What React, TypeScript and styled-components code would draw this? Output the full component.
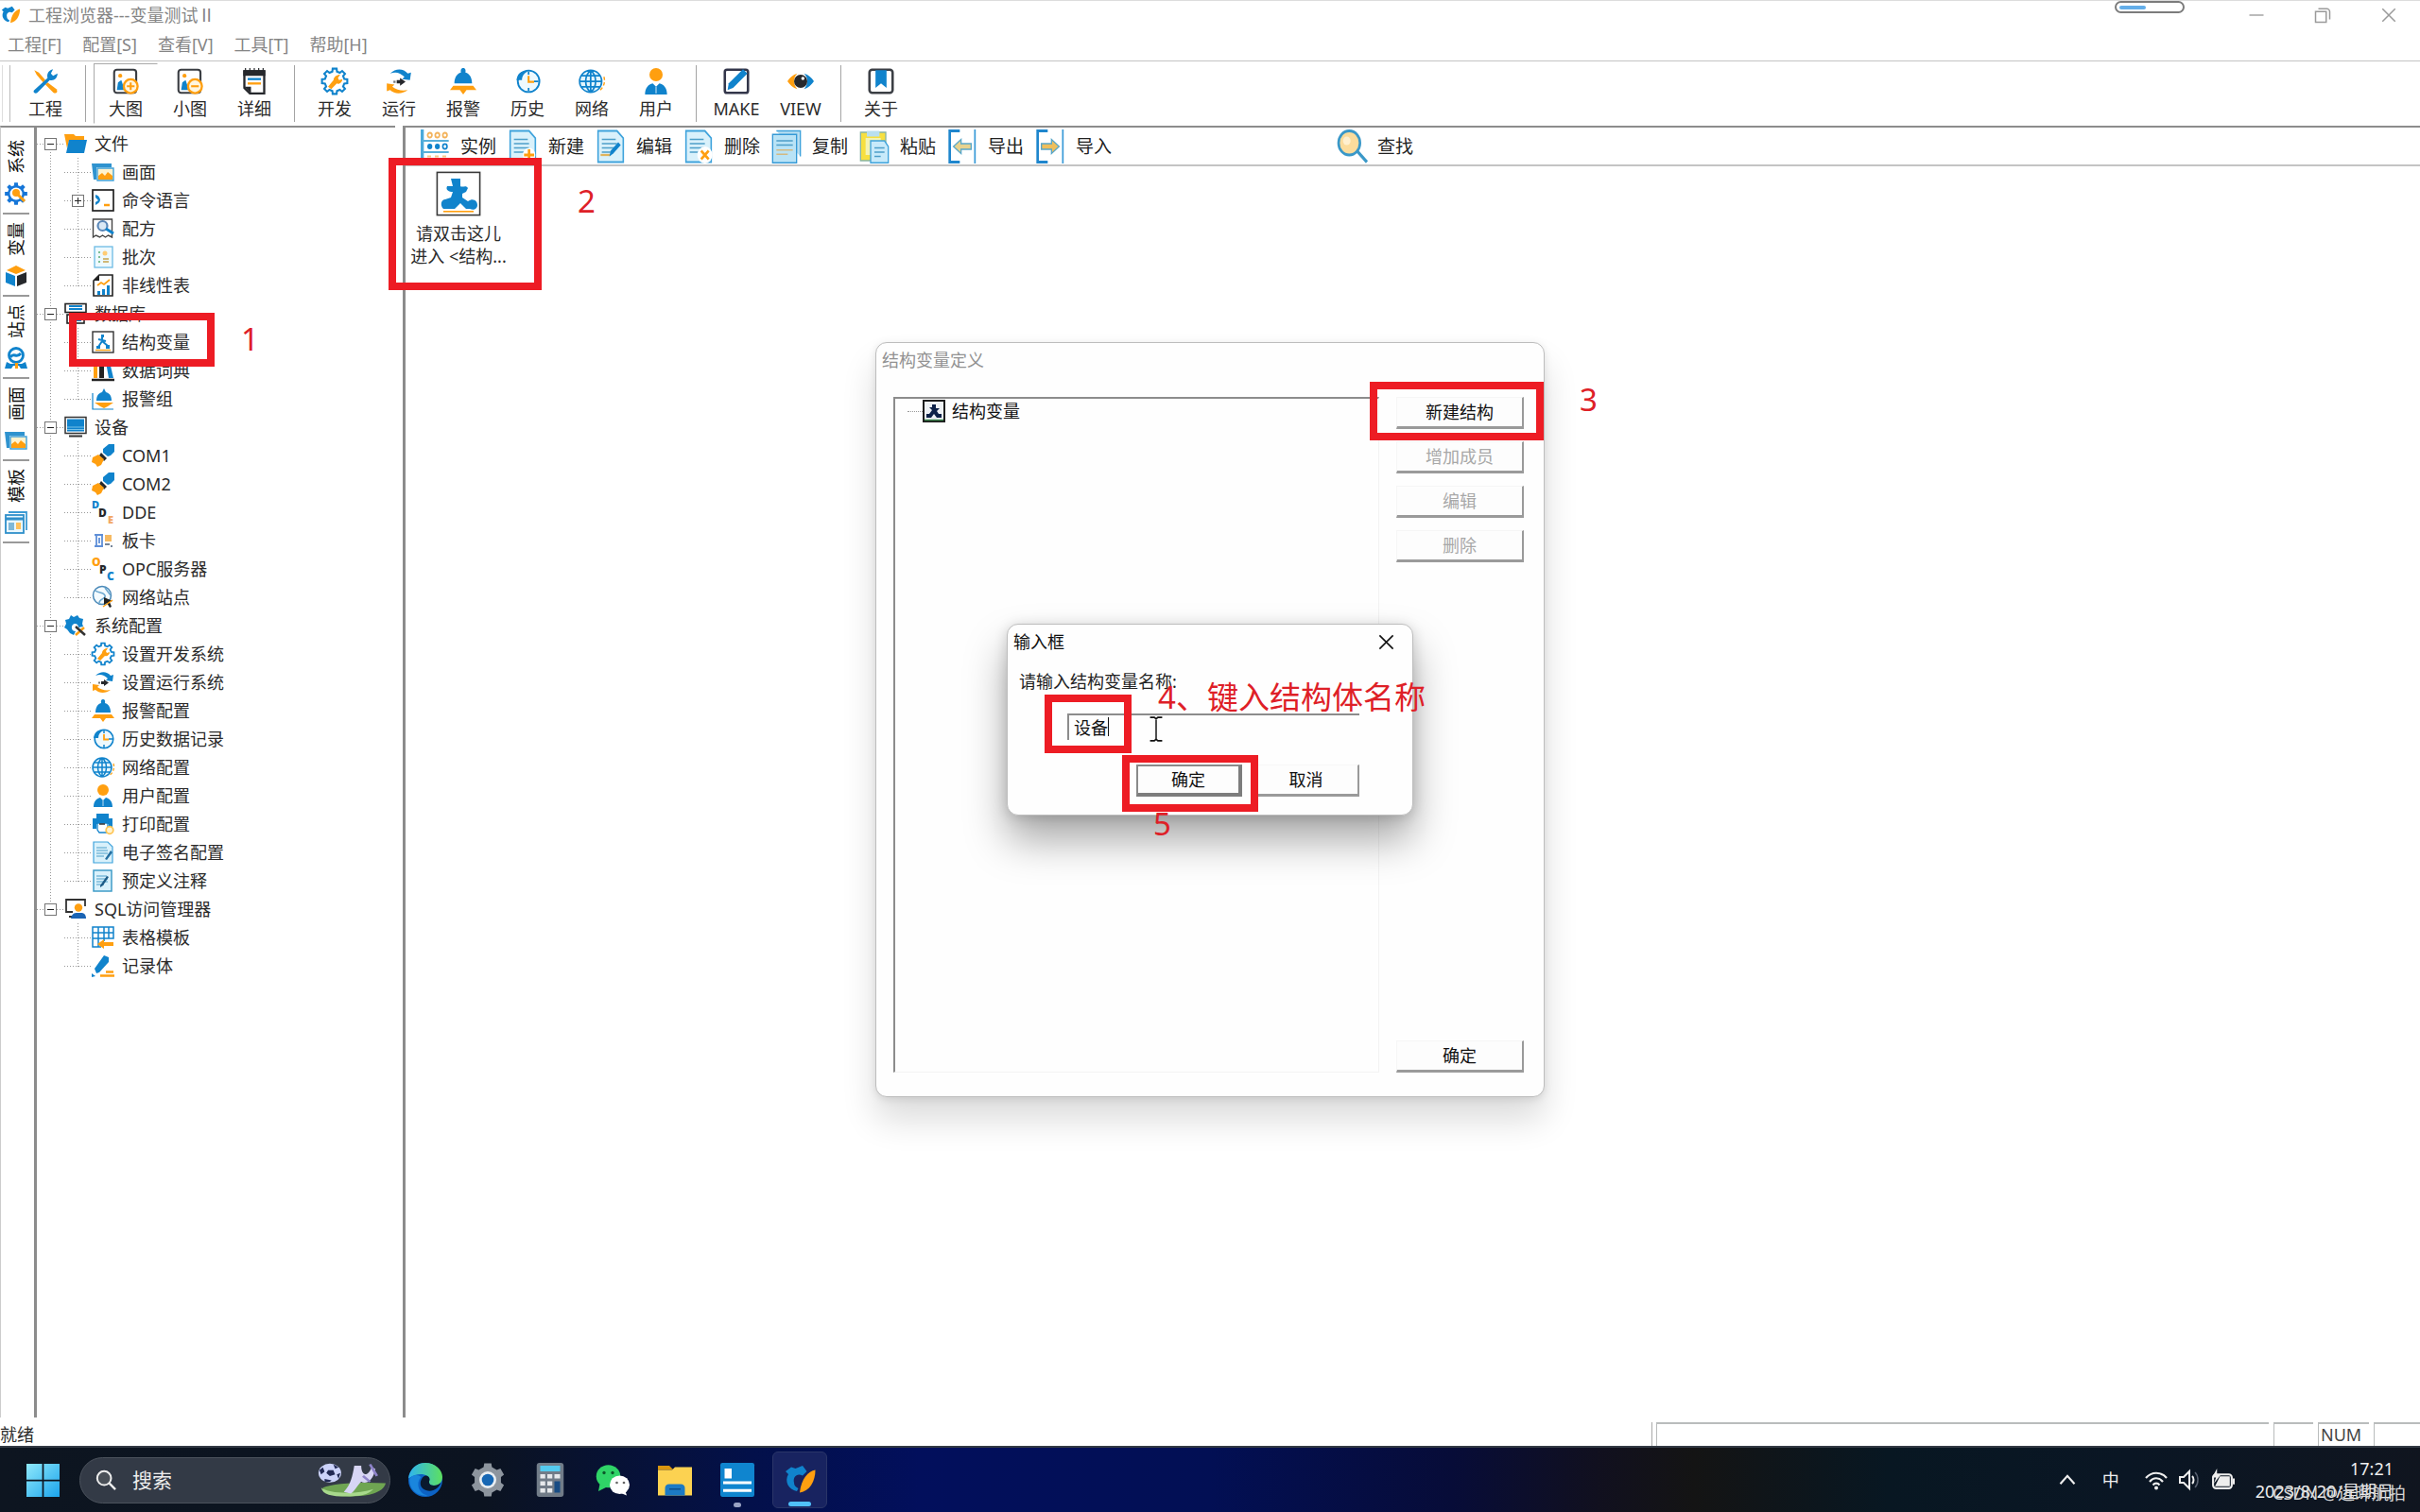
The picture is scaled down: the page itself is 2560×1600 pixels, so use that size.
import React from "react";
import styled, { createGlobalStyle, css } from "styled-components";

const BLUE = "#1083cc";
const ORANGE = "#ff9f10";
const INK = "#26282c";
const SKY = "#d9f1fb";
const EDGE = "#8c8c8c";
const RED = "#ed1c24";

const Global = createGlobalStyle`
  *, *::before, *::after { box-sizing: border-box; }
  body { margin: 0; background: #fff; color: #2b2b2b;
    font: 18px/24px "Noto Sans", "Noto Sans CJK SC", sans-serif; }
  button, input { font: inherit; color: inherit; margin: 0; padding: 0; border: 0; background: none; border-radius: 0; }
  ul { list-style: none; margin: 0; padding: 0; }
  svg { display: block; flex: none; overflow: visible; }
`;

/* ---------- drawings ---------- */

const gearPath = (teeth: number, outer: number, inner: number) => {
  const pts: string[] = [];
  const step = (Math.PI * 2) / teeth;
  for (let i = 0; i < teeth; i++) {
    const a = i * step - Math.PI / 2;
    [[-0.3, inner], [-0.2, outer], [0.2, outer], [0.3, inner]].forEach(([k, r]) => {
      pts.push(`${(12 + Math.cos(a + k * step) * r).toFixed(2)} ${(12 + Math.sin(a + k * step) * r).toFixed(2)}`);
    });
  }
  return `M${pts.join("L")}Z`;
};

const page = <path d="M2 1h15l5 5v17H2z" fill={SKY} stroke="#3fa3dc" strokeWidth="1.2" />;
const pageLines = <path d="M5 7h11M5 10h12M5 13h12M5 16h8" stroke="#4d9fc9" strokeWidth="1" fill="none" />;
const photo = (
  <>
    <rect x="1.5" y="1.5" width="20" height="21" rx="2.5" fill="#fff" stroke="#3a3d42" strokeWidth="1.8" />
    <circle cx="7" cy="7" r="1.8" fill={ORANGE} />
    <path d="M4 20l1-7 3-2 3 9z" fill={BLUE} />
    <circle cx="16.5" cy="16.5" r="6.3" fill="#fff6df" stroke={ORANGE} strokeWidth="2" />
  </>
);

const art: Record<string, React.ReactNode> = {
  logo: (
    <>
      <path d="M10 20C4 19 1 13 4 8l-2-2 4-3 3 1 5-2 3 4-3 3c-4-2-7 1-6 5 0 2 1 3 3 4z" fill={BLUE} />
      <path d="M23 5c-5 1-10 6-11 16 7-1 11-8 11-16z" fill={ORANGE} />
    </>
  ),
  tools: (
    <>
      <path d="M2 2l4 2 6 7-2 2-6-7z" fill={ORANGE} />
      <path d="M14 13l8 6c2 3-1 5-3 3l-7-7z" fill={ORANGE} />
      <path d="M2 20L14 9c-1-4 1-7 5-8l-2 4 2 2 4-2c0 4-3 7-7 6L5 22c-2 2-5 0-3-2z" fill={BLUE} />
    </>
  ),
  zoomIn: <>{photo}<path d="M13 16.500h7M16.500 13v7" stroke={ORANGE} strokeWidth="1.800" /></>,
  zoomOut: <>{photo}<path d="M13 16.500h7" stroke={ORANGE} strokeWidth="1.800" /></>,
  detail: (
    <>
      <path d="M3 3h18v20H8l-5-5z" fill="#fff" stroke={INK} strokeWidth="2" />
      <path d="M2 2h20v5H2zM3 17l6 6v-6z" fill={INK} />
      <path d="M4 0v3M8 0v3M12 0v3M16 0v3M20 0v3" stroke={INK} />
      <path d="M6 10h12" stroke={BLUE} strokeWidth="2" /><path d="M6 14h12" stroke={ORANGE} strokeWidth="2" />
    </>
  ),
  dev: (
    <>
      <path d={gearPath(8, 11.6, 9)} fill="none" stroke={BLUE} strokeWidth="1.8" />
      <path d="M6 17l5-6c0-3 3-5 6-5l-2 3 1 2 3-1c0 3-3 5-5 4l-5 5z" fill={ORANGE} />
    </>
  ),
  run: (
    <>
      <path d="M4 5c5-5 12-5 16 0l3-1-1 7-7-1 2-2C13 4 9 3 4 5z" fill={BLUE} />
      <path d="M20 20c-5 4-12 4-16 0l-3 1V14l7 1-2 2c4 3 9 4 14 3z" fill={ORANGE} />
      <path d="M10 11h3V9l5 3.500-5 3.500v-2h-3z" fill={INK} /><path d="M7 12.500h2" stroke="#777" strokeWidth="2" />
    </>
  ),
  bell: (
    <>
      <path d="M12 0c2 0 2.500 2 2 4 4 1 6 5 6 10H4C4 9 6 5 10 4c-.5-2 0-4 2-4z" fill={BLUE} />
      <path d="M3 16h18l3 4H15l-3 4-3-4H0z" fill={ORANGE} />
    </>
  ),
  bellGroup: (
    <>
      <path d="M1 6v17h22" fill="none" stroke={BLUE} strokeWidth="1.2" />
      <path d="M13 1l2 4c4 1 6 4 6 9H5c0-5 2-8 6-9z" fill={BLUE} />
      <path d="M3 16h20l-6 4-4 2-4-2z" fill={ORANGE} />
    </>
  ),
  history: (
    <>
      <circle cx="13" cy="12" r="9.800" fill="#eef9fe" stroke={BLUE} strokeWidth="1.600" />
      <path d="M13 3v3M13 18v3M18 12h4" stroke={BLUE} strokeWidth="1.500" />
      <path d="M0 11h7c0-4 2-6 5-8C6 2 3 5 2 11z" fill={BLUE} />
      <path d="M13 7v5.500h5" fill="none" stroke={ORANGE} strokeWidth="1.800" />
    </>
  ),
  globe: (
    <>
      <circle cx="11" cy="12" r="10" fill="#e3f5fc" />
      <path d="M11 2a10 10 0 100 20 10 10 0 000-20zM11 2v20M1 12h20M3 7h16M3 17h16M11 2c-6 5-6 15 0 20M11 2c6 5 6 15 0 20" fill="none" stroke={BLUE} strokeWidth="1.500" />
      <path d="M23 8a11 11 0 01-5 13" fill="none" stroke={ORANGE} strokeWidth="1.200" strokeDasharray="3 2" />
    </>
  ),
  user: (
    <>
      <circle cx="12" cy="6" r="6" fill={ORANGE} />
      <path d="M2 24c0-6 3-9 7-10l3 3 3-3c4 1 7 4 7 10z" fill={BLUE} /><path d="M12 17v6" stroke="#fff" strokeWidth=".7" />
    </>
  ),
  make: (
    <>
      <rect x="1.500" y="1.500" width="21" height="21" rx="2" fill="#fff" stroke="#33364a" strokeWidth="2.200" />
      <path d="M4 20l1-6L18 1l4 4L9 18z" fill={BLUE} />
    </>
  ),
  view: (
    <>
      <path d="M9 5C5 6 2 9 0 12c2 3 5 6 9 7-4-4-4-10 0-14z" fill={ORANGE} />
      <path d="M15 5c4 1 7 4 9 7-2 3-5 6-9 7 4-4 4-10 0-14z" fill={BLUE} />
      <circle cx="12" cy="12" r="6" fill={INK} /><circle cx="14" cy="9.500" r="1.500" fill="#fff" />
    </>
  ),
  about: (
    <>
      <rect x="1.500" y="1.500" width="21" height="21" rx="2.500" fill="#fff" stroke="#3c3f45" strokeWidth="2.200" />
      <path d="M7 2h10v16l-5-4-5 4z" fill={BLUE} />
    </>
  ),
  folder: (
    <>
      <path d="M0 2h10l2 2h9v5H5L3 17z" fill={ORANGE} /><path d="M5 8h19l-3 14H2z" fill={BLUE} />
    </>
  ),
  pictures: (
    <>
      <path d="M0 3h21v4H5v13H2z" fill="#2f93cf" /><path d="M6 8h17v13H6z" fill="#fff3cf" stroke="#3fa0d8" strokeWidth="1.400" />
      <path d="M7 20v-4l4-3 3 3 3-4 5 4v4z" fill={ORANGE} />
    </>
  ),
  cmd: (
    <>
      <rect x="1" y="1" width="22" height="22" fill="#fff" stroke="#222" strokeWidth="1.700" />
      <path d="M4 6c4 1 4 3 5 5 0 3-2 4-5 6v-3l3-2-3-3z" fill={BLUE} /><path d="M13 17h6" stroke={ORANGE} strokeWidth="2.500" />
    </>
  ),
  recipe: (
    <>
      <path d="M1.500 2h20v19l-4-2-3 2-3-2-3 2-4-2-3 2z" fill="#fff" stroke="#444" strokeWidth="1.400" />
      <circle cx="11.500" cy="9" r="5" fill="#dbe9f5" stroke="#5a87b8" strokeWidth="2.200" /><path d="M15 12l8 5" stroke={BLUE} strokeWidth="3" />
    </>
  ),
  batch: (
    <>
      <rect x="3" y="1" width="19" height="22" fill="#edf9ff" stroke="#6cbbe4" strokeWidth="1.300" />
      <path d="M8 6v13" stroke="#58ac73" strokeWidth="1.500" strokeDasharray="2 3" /><circle cx="14" cy="8" r="2.500" fill="#ffcc74" />
      <path d="M12 14h6M12 17h6" stroke="#d0b878" strokeWidth="2" />
    </>
  ),
  chart: (
    <>
      <path d="M8 1h14v22H2V7z" fill="#fff" stroke="#222" strokeWidth="1.600" /><path d="M8 1v6H2z" fill="#222" />
      <path d="M6 12l4-3 3 2 6-5" fill="none" stroke={ORANGE} strokeWidth="1.800" /><path d="M6 22v-4h3v4zM11 22v-6h3v6zM16 22V12h3v10z" fill={BLUE} />
    </>
  ),
  db: (
    <>
      <rect x="1" y="1.500" width="22" height="9" fill="#fff" stroke="#222" strokeWidth="1.600" />
      <path d="M5 4h14M5 7h14" stroke={BLUE} strokeWidth="2" />
      <rect x="3" y="13" width="18" height="9" fill="#fff" stroke="#222" strokeWidth="1.600" /><path d="M12 16h6v4h-6z" fill={BLUE} />
    </>
  ),
  struct: (
    <>
      <rect x="1" y="1" width="22" height="22" fill="#fff" stroke="#333" strokeWidth="1.400" />
      <path d="M11 5v7M7 9l8 2M11 11l-4 6M11 11l6 5" stroke={BLUE} strokeWidth="2" />
      <path d="M10 4h3v3h-3zM5 16h4v3H5zM15 15h4v4h-4z" fill={BLUE} />
      <path d="M4 20.500h16" stroke={ORANGE} strokeWidth="1.400" />
    </>
  ),
  structBig: (
    <>
      <rect x=".7" y=".7" width="22.600" height="22.600" fill="#fff" stroke="#3a3a3a" strokeWidth=".8" />
      <path d="M8 4h5v4c1 1 3-1 4 1l-1 2-2 1v2l3 2c3-2 5 0 5 2s-2 3-4 2h-2l-3-3-3 3H4c-2-2-1-5 1-5l3-1 1-3c-2 0-4-1-3-3h3z" fill={BLUE} />
      <path d="M4 21.400h16" stroke={ORANGE} strokeWidth=".8" />
    </>
  ),
  structDark: (
    <>
      <rect x="1" y="1" width="22" height="22" fill="#eef1f4" stroke="#1c1c1c" strokeWidth="2" />
      <path d="M10 5h4v4h4l-3 3 2 3h3v4h-5l-3-4-3 4H4v-4h3l3-4-3-3h3z" fill="#0d2148" />
      <path d="M2 21.500h20" stroke="#3f8a50" strokeWidth="1.500" />
    </>
  ),
  books: (
    <>
      <path d="M2 3h4v17H2z" fill={ORANGE} /><path d="M8 1h5v19H8z" fill="#222" /><path d="M15 3h4l4 17h-5z" fill={BLUE} />
      <path d="M0 22h24" stroke="#222" strokeWidth="2.500" />
    </>
  ),
  monitor: (
    <>
      <rect x="1" y="1.500" width="22" height="17" fill="#fff" stroke="#333" strokeWidth="1.500" /><path d="M3 3.500h18v13H3z" fill={BLUE} />
      <path d="M3 12h18M3 14.500h18" stroke="#8fd0ef" strokeWidth=".8" /><path d="M5 21.500h14" stroke="#333" strokeWidth="2" />
    </>
  ),
  plug: (
    <>
      <path d="M12 5l6-5h6v8l-4 4-3 1-5-4z" fill={BLUE} /><path d="M10 9l6 6-3 3-5-6z" fill={INK} />
      <path d="M1 14l6-3 6 5-3 6-4 2-2-3-4-2z" fill={ORANGE} />
    </>
  ),
  dde: (
    <g fontFamily="Open Sans" fontWeight="800" fontSize="11">
      <text x="0" y="8" fill={BLUE}>D</text><text x="7" y="17" fill={INK} fontSize="12">D</text><text x="17" y="24" fill="#f2a765">E</text>
    </g>
  ),
  opc: (
    <g fontFamily="Open Sans" fontWeight="800" fontSize="12">
      <text x="0" y="9" fill={ORANGE}>O</text><text x="8" y="17" fill={INK}>P</text><text x="16" y="24" fill={BLUE}>C</text>
    </g>
  ),
  board: (
    <>
      <path d="M3 6h9M5 6v12M3 18h9M8 9v6M11 6v12" stroke="#5f8fd8" strokeWidth="1.800" />
      <path d="M14 6h7v7h-7z" fill="#f6ba62" /><path d="M14 16h5M20 18h2" stroke="#77879a" strokeWidth="2" />
    </>
  ),
  netSite: (
    <>
      <circle cx="11" cy="10" r="9.500" fill="#f4fbff" stroke="#4a89b8" strokeWidth="1.500" />
      <path d="M4 5c3 3 8 1 10 5s-6 3-6 8M14 2l6 8" fill="none" stroke="#6ba7cf" strokeWidth="1.500" />
      <path d="M13 12l9 4-3 1 2 5-2 1-3-5-3 2z" fill="#222" /><path d="M12 22l10-7" stroke={ORANGE} strokeWidth="1.500" />
    </>
  ),
  sysGear: (
    <>
      <path d="M7 1l3 2 4-2 2 3 4 1-1 5 1 3-5 1c0-6-8-5-7 1 0 2 2 3 4 3l-2 4-4-2-3-4-3-2 2-4-1-4 4-1z" fill={BLUE} />
      <path d="M12 22l9-8" stroke={ORANGE} strokeWidth="2.500" /><path d="M12 13l10 9" stroke="#333" strokeWidth="2.500" />
    </>
  ),
  printer: (
    <>
      <path d="M5 1h13v5H5zM1 6h21v11h-4v-5H5v5H1z" fill={BLUE} /><path d="M6 11h11v10H8l-2-3z" fill="#fff" stroke={BLUE} strokeWidth="1.300" />
      <path d="M8 12h6" stroke="#333" strokeWidth="1.500" /><circle cx="19" cy="18.500" r="3.800" fill="#fff3cf" stroke="#ffc452" strokeWidth="1.800" />
    </>
  ),
  sign: <>{page}{pageLines}<path d="M14 19l6-9 2 2-6 8z" fill="#246fa0" /></>,
  note: (
    <>
      <rect x="2" y="1" width="19" height="22" fill={SKY} stroke="#3f9cc8" strokeWidth="1.500" />
      {pageLines}<path d="M9 17l7-10 2 1-6 9-3 2z" fill="#1d5b86" />
    </>
  ),
  sql: (
    <>
      <path d="M9 15H2V2h20v7M5 20h6" fill="none" stroke="#333" strokeWidth="1.800" />
      <circle cx="15" cy="10.500" r="4.200" fill={ORANGE} /><path d="M7 22c1-5 3-6 7-6h4c3 0 5 2 5 6z" fill="#1b64b4" />
    </>
  ),
  table: (
    <>
      <path d="M1 1h22v12H1zM1 7h22M1 13v9h9M7 1v21M13 1v15M18 1v12" fill="none" stroke={BLUE} strokeWidth="1.500" />
      <path d="M6 19l7-5v3h10v4H13v3z" fill={ORANGE} />
    </>
  ),
  pen: (
    <>
      <path d="M3 15L13 1l5 2v5L8 19l-3 1z" fill={BLUE} /><path d="M0 20l4 3-4 1z" fill={BLUE} />
      <path d="M9 22.500h15M15 18.500h8" stroke={ORANGE} strokeWidth="2.500" />
    </>
  ),
  gearSearch: (
    <>
      <path d={gearPath(8, 12, 9)} fill="#1676d8" /><circle cx="12" cy="12" r="6.500" fill="#fff" />
      <circle cx="12" cy="11" r="4" fill={ORANGE} /><path d="M14 13l7 7" stroke={ORANGE} strokeWidth="3" />
    </>
  ),
  cube: (
    <>
      <path d="M2 6l10-5 10 5-10 4z" fill={ORANGE} /><path d="M1 8l10 4v11L1 19z" fill={BLUE} /><path d="M23 8l-10 4v11l10-4z" fill={INK} />
    </>
  ),
  site: (
    <>
      <circle cx="12" cy="9" r="7.500" fill="#fff" stroke={BLUE} strokeWidth="2.800" /><path d="M6 11c4-6 6 2 11-4" fill="none" stroke={BLUE} strokeWidth="3" />
      <path d="M2 16l4 2h12l4-2 2 7h-7l-2-3H9l-2 3H0z" fill={BLUE} /><path d="M11 17h3v6h-3z" fill={ORANGE} />
    </>
  ),
  template: (
    <>
      <path d="M4 1h19v19" fill="none" stroke="#3c9bd4" strokeWidth="1.800" /><rect x="1" y="4" width="19" height="19" fill="#eaf7fd" stroke="#2f8fca" strokeWidth="1.800" />
      <path d="M1 8h19" stroke="#2f8fca" strokeWidth="3" /><path d="M4 12h6v8H4z" fill="#7fb8d8" /><path d="M12 12h5v7h-5z" fill="#ffc15d" />
    </>
  ),
  instance: (
    <>
      <path d="M2 0v24" stroke="#4ba9db" strokeWidth="2.500" /><path d="M2 8h21M2 16h21M2 22h21" stroke="#58afd9" strokeWidth="1.300" />
      <g fill="none" stroke="#f3b35c" strokeWidth="1.300"><circle cx="8" cy="4" r="1.700" /><circle cx="14" cy="4" r="1.700" /><circle cx="20" cy="4" r="1.700" /></g>
      <circle cx="8" cy="12" r="2" fill={BLUE} /><circle cx="14" cy="12" r="2" fill={BLUE} /><circle cx="20" cy="12" r="1.700" fill="none" stroke={BLUE} strokeWidth="1.200" />
      <path d="M6 19h16" stroke="#f3c98c" strokeWidth="1.200" strokeDasharray="3 3" />
    </>
  ),
  docNew: <>{page}{pageLines}<circle cx="17" cy="18" r="5" fill="#fff" /><path d="M13 18h8M17 14v8" stroke={ORANGE} strokeWidth="2" /></>,
  docEdit: <>{page}{pageLines}<path d="M4 18h8" stroke="#e0b45c" strokeWidth="1.500" /><path d="M11 19l1-4 6-6 2 2-6 6z" fill={BLUE} /></>,
  docDelete: <>{page}{pageLines}<circle cx="17" cy="18" r="6" fill="#fff" /><path d="M14 15l6 6M20 15l-6 6" stroke={ORANGE} strokeWidth="2" /></>,
  docCopy: (
    <>
      <path d="M4 1h19v18" fill="#b7def1" stroke="#3fa3dc" /><rect x="1" y="3.500" width="19" height="20" fill="#b9e3f6" stroke="#3599d6" />
      <path d="M4 8h13M4 11h13" stroke="#4d9fc9" /><path d="M4 14.500h13M4 17.500h9" stroke="#d4b981" />
    </>
  ),
  paste: (
    <>
      <path d="M1 2h20v20H1z" fill="#f7e040" stroke="#88b4a4" /><path d="M5 6h12v12H5z" fill="#f4f3b4" /><path d="M6 1h10v4H6z" fill="#b9dff0" />
      <path d="M9 8h11l3 4v11.500H9z" fill="#c8eafa" stroke="#3fa3dc" /><path d="M12 13h8M12 16h8M12 19h5" stroke="#4d9fc9" />
    </>
  ),
  exportDoc: (
    <>
      <path d="M10 1H2v22h8" fill="none" stroke="#1f86cd" strokeWidth="2" /><path d="M22 0v24" stroke="#3a9bd8" strokeWidth="1.300" />
      <path d="M5 12l6-5v3h8v4h-8v3z" fill="#e7d38f" stroke="#5aa7c8" />
    </>
  ),
  importDoc: (
    <>
      <path d="M10 1H2v22h8" fill="none" stroke="#1f86cd" strokeWidth="2" /><path d="M22 0v24" stroke="#3a9bd8" strokeWidth="1.300" />
      <path d="M19 12l-6-5v3H5v4h8v3z" fill="#efbf5c" stroke="#5aa7c8" />
    </>
  ),
  find: (
    <>
      <circle cx="10" cy="9.500" r="8.500" fill="#fbdc9c" stroke="#3a98c8" strokeWidth="2" /><circle cx="8" cy="8" r="3" fill="#fff0cf" />
      <path d="M16 15l8 8" stroke="#3a98c8" strokeWidth="2.200" />
    </>
  ),
  close: <path d="M3 3l18 18M21 3L3 21" stroke="currentColor" strokeWidth="2" />,
  minimise: <path d="M2 12h20" stroke="currentColor" strokeWidth="1.800" />,
  restore: <path d="M2 7h15v15H2zM6 3h12c2 0 4 2 4 4v11" fill="none" stroke="currentColor" strokeWidth="2" />,
  caretUp: <path d="M3 17l9-10 9 10" fill="none" stroke="currentColor" strokeWidth="2.600" />,
  wifi: (
    <>
      <path d="M1 10c6-7 16-7 22 0M5 14c4-5 10-5 14 0M8.500 17.500c2-2.500 5-2.500 7 0" fill="none" stroke="currentColor" strokeWidth="2.200" />
      <circle cx="12" cy="20.500" r="2" fill="currentColor" />
    </>
  ),
  speaker: (
    <>
      <path d="M2 9h4l6-6v18l-6-6H2z" fill="none" stroke="currentColor" strokeWidth="2" />
      <path d="M15 8c2 2 2 6 0 8" fill="none" stroke="currentColor" strokeWidth="2" /><path d="M18 4c4 4 4 12 0 16" fill="none" stroke="#596170" strokeWidth="1.500" />
    </>
  ),
  battery: (
    <>
      <rect x="2" y="6" width="19" height="14" rx="3" fill="none" stroke="currentColor" strokeWidth="2" /><path d="M22 10h2v6h-2zM9 8h10v10H4z" fill="currentColor" />
      <path d="M6 0L1 9h4l-2 6 7-9H6z" fill="currentColor" />
    </>
  ),
  windows: <path d="M0 0h11.400v11.400H0zM12.600 0H24v11.400H12.600zM0 12.600h11.400V24H0zM12.600 12.600H24V24H12.600z" fill="url(#winFill)" />,
  magnifier: <><circle cx="10" cy="10" r="8" fill="#4a5058" stroke="#eee" strokeWidth="2.200" /><path d="M16 16l7 7" stroke="#eee" strokeWidth="2.600" /></>,
  edge: (
    <>
      <circle cx="12" cy="12" r="12" fill="#0c62c4" />
      <path d="M0 11C1 4 6 0 12 0c7 0 12 5 12 10 0 4-3 6-6 6s-4-2-3-4c0-4-8-6-15-1z" fill="url(#edgeFill)" />
      <path d="M15 12c-1 2 0 4 3 4 2 0 4-1 5-2-2 5-8 8-13 4-3-3-1-8 2-9 2 0 3 1 3 3z" fill="#0a1a2e" /><path d="M9 10c-4 4-2 12 5 13-8 1-14-5-13-12 2-3 6-3 8-1z" fill="#1a86dd" />
    </>
  ),
  settings: <><path d={gearPath(6, 12, 9.500)} fill="#8d959e" /><circle cx="12" cy="12" r="6" fill="#e9eef2" /><circle cx="12" cy="12" r="4.200" fill="#1667b4" /></>,
  calc: (
    <>
      <rect x="2.500" y="0" width="19" height="24" rx="2" fill="#717c88" /><path d="M5 2h14v4H5z" fill="#54cbf0" />
      <path d="M5 8h3.500v3H5zM10 8h3.500v3H10zM15 8h4v3h-4zM5 13h3.500v3H5zM10 13h3.500v3H10zM5 18h3.500v3H5zM10 18h3.500v3H10z" fill="#e6e9ec" /><path d="M15 13h4v8h-4z" fill="#174c84" />
    </>
  ),
  wechat: (
    <>
      <ellipse cx="9" cy="9.500" rx="8.500" ry="8" fill="#2fd467" /><path d="M2 20l1-5 5 2z" fill="#2fd467" />
      <ellipse cx="17" cy="15.500" rx="7" ry="6.500" fill="#fff" /><path d="M22 23l-1-3-4 1z" fill="#fff" />
      <circle cx="6" cy="7" r="1.100" fill="#0c5a2b" /><circle cx="12" cy="7" r="1.100" fill="#0c5a2b" /><circle cx="15" cy="14" r=".9" fill="#666" /><circle cx="20" cy="14" r=".9" fill="#666" />
    </>
  ),
  explorer: (
    <>
      <path d="M0 2h8l3 3H0z" fill="#d9960f" /><path d="M0 5h10l2-2h12v20H0z" fill="#fcd251" /><path d="M5 23v-5c0-2 1-3 3-3h8c2 0 3 1 3 3v5z" fill="#1c7ac4" /><path d="M8 18.500h8" stroke="#0c4f8c" />
    </>
  ),
  docApp: (
    <>
      <rect width="24" height="24" rx="1.500" fill="#0f85cf" /><path d="M3 4h5v7H3z" fill="#fff" /><path d="M2 14h20M2 19.500h20" stroke="#fff" strokeWidth="2" />
    </>
  ),
  football: (
    <>
      <circle cx="7" cy="7" r="6.500" fill="#ccd3fa" /><path d="M6 5h3l1 3-3 1-2-2zM1 5l2-2 1 3-2 2zM4 11l4 1-1 1H4zM9 1l3 2-2 1zM11 8l2-1-1 4z" fill="#222a55" />
      <path d="M3 17c6-3 22-4 36-3-1 5-7 9-19 9-11 0-17-2-17-6z" fill="#6fa552" /><path d="M2 17c4 4 20 5 30 1-3 4-8 5-16 5S3 22 2 17z" fill="#a8d98c" />
      <path d="M21 2h4c0 6 3 9 6 1l2 1c-1 8-5 11-8 9-2 2-4 7-6 8l-4-1c4-5 5-11 6-18z" fill="#d7d5f4" /><path d="M30 1l4 8M26 9l4 4" stroke="#8e83c9" strokeWidth="1.500" />
    </>
  ),
  ibeam: <path d="M5 1h5l2 1.500L14 1h5M12 2.500v19M5 23h5l2-1.500 2 1.500h5" fill="none" stroke="#111" strokeWidth="1.600" />,
};

type IconProps = { name: string; w?: number; h?: number; vw?: number };
const Icon = ({ name, w = 24, h = w, vw = 24 }: IconProps) => (
  <svg width={w} height={h} viewBox={`0 0 ${vw} 24`} preserveAspectRatio="none" aria-hidden="true">
    {name === "windows" && (
      <linearGradient id="winFill" x2="1" y2="1"><stop stopColor="#8fe9fb" /><stop offset="1" stopColor="#1ba4ec" /></linearGradient>
    )}
    {name === "edge" && (
      <linearGradient id="edgeFill"><stop stopColor="#2fb4f0" /><stop offset="1" stopColor="#5de05f" /></linearGradient>
    )}
    {art[name]}
  </svg>
);

/* ---------- main window ---------- */

const Screen = styled.div`
  position: relative; display: flex; flex-direction: column; min-height: 100vh; border-top: 1px solid #dcdcdc; overflow: hidden;
`;
const TitleBar = styled.header`
  display: flex; align-items: center; height: 29px; color: #858585;
`;
const AppTitle = styled.h1`
  flex: 1; margin: 0 0 0 8px; font: inherit;
`;
const WindowControls = styled.div`
  display: flex; gap: 52px; padding-right: 24px; color: #9a9a9a;
`;
const IconButton = styled.button`
  display: flex; align-items: center; justify-content: center;
`;
const ProgressPill = styled.div`
  width: 74px; height: 13px; margin: -16px 67px 0 0; padding: 3px; border: 2px solid #7c7c7c; border-radius: 7px;
  &::before { content: ""; display: block; width: 28px; height: 4px; border-radius: 2px; background: #64aee9; }
`;
const MenuBar = styled.nav`
  display: flex; gap: 22px; height: 34px; padding-left: 8px; align-items: center; color: #858585;
`;
const ToolBar = styled.div`
  display: flex; align-items: center; height: 69px; padding-left: 2px; border-top: 1px solid #c4c4c4;
`;
const Grip = styled.div`
  width: 12px; height: 60px; border-left: 1px solid #ddd; position: relative;
  &::after { content: ""; position: absolute; left: 7px; top: 0; height: 100%; border-left: 1px solid #bbb; }
`;
const ToolButton = styled.button<{ $on?: boolean }>`
  display: flex; flex-direction: column; align-items: center; gap: 3px; width: 68px; height: 64px; padding-top: 4px;
  border: 1px solid transparent;
  ${(p) => p.$on && css`border-color: #aaa transparent transparent #aaa;`}
`;
const ToolSeparator = styled.div`
  width: 1px; height: 60px; margin: 0 8px; background: #a4a4a4;
`;

const Main = styled.main`
  display: flex; flex: 1;
`;
const TabStrip = styled.div`
  width: 36px; padding-top: 5px; border-top: 2px solid ${EDGE}; border-left: 1px solid #ccc;
`;
const SideTab = styled.button`
  display: flex; flex-direction: column; align-items: center; gap: 9px; width: 28px; height: 87px; margin-left: 2px;
  padding-top: 8px; border-bottom: 2px solid #999;
`;
const SideTabText = styled.span`
  writing-mode: vertical-rl; text-orientation: sideways; transform: rotate(180deg); height: 36px; color: #111;
`;
const TreePanel = styled.aside`
  width: 382px; margin-right: 8px; padding-top: 2px; border-top: 2px solid ${EDGE}; border-left: 3px solid ${EDGE};
`;
const TreeRow = styled.li`
  position: relative; display: flex; align-items: center; height: 30px;
`;
const TreeText = styled.span`
  margin-left: 8px; white-space: nowrap;
`;
const Guide = styled.span<{ $from: number; $to: number; $stub?: boolean }>`
  display: flex; align-items: center; width: 29px; height: 30px; padding-left: 8px;
  background:
    linear-gradient(90deg, #999 1px, transparent 1px) 15px 15px / 3px ${(p) => (p.$stub ? 1 : 0)}px repeat-x,
    linear-gradient(#999 1px, transparent 1px) 14px 0 / 1px 3px repeat-y;
  clip-path: ${(p) => `polygon(0 ${p.$from}px, 15px ${p.$from}px, 15px 7px, 29px 7px, 29px 23px, 15px 23px, 15px ${p.$to}px, 0 ${p.$to}px)`};
`;
const Expander = styled.button<{ $open: boolean }>`
  width: 13px; height: 13px; border: 1px solid #757575;
  background: linear-gradient(#222, #222) center / 7px 1px no-repeat,
    linear-gradient(#222, #222) center / 1px ${(p) => (p.$open ? 0 : 7)}px no-repeat, #fff;
`;

const Pane = styled.section`
  flex: 1; border-top: 2px solid ${EDGE}; border-left: 3px solid ${EDGE};
`;
const PaneBar = styled.div`
  display: flex; align-items: center; height: 41px; padding-left: 15px; border-bottom: 2px solid #c4c4c4;
`;
const PaneButton = styled.button<{ $apart?: boolean }>`
  display: flex; align-items: center; gap: 11px; width: 93px; font-size: 19px; white-space: nowrap; color: #222;
  margin-left: ${(p) => (p.$apart ? 226 : 0)}px;
`;
const PaneBody = styled.div`
  padding: 5px 6px;
`;
const BigItem = styled.button`
  position: relative; display: flex; flex-direction: column; align-items: center; gap: 6px; width: 100px; white-space: nowrap;
`;

const StatusBar = styled.footer`
  display: flex; align-items: flex-end; height: 30px;
`;
const StatusText = styled.span`
  flex: 1; height: 24px;
`;
const StatusCell = styled.span<{ $w: number; $first?: boolean }>`
  width: ${(p) => p.$w}px; height: 25px; margin-left: 5px; padding-left: 2px; border: solid #b9bcbc; border-width: 2px 0 0 1px;
  line-height: 22px; color: #444;
  box-shadow: ${(p) => (p.$first ? "-4px 0 0 0 #fff, -5px 0 0 0 #aaa" : "none")};
`;

/* ---------- windows above the page ---------- */

const Layer = styled.div`
  position: absolute; inset: 0 0 78px 0; display: grid; place-items: center; pointer-events: none;
`;
const DialogFrame = styled.div<{ $w: number; $deep?: boolean }>`
  width: ${(p) => p.$w}px; border: 1px solid #bdbdbd; border-radius: 12px; background: #fefefe; pointer-events: auto;
  box-shadow: ${(p) => (p.$deep ? "0 26px 44px rgba(0,0,0,.34), 0 2px 14px rgba(0,0,0,.16)" : "0 24px 36px rgba(0,0,0,.14), 0 2px 8px rgba(0,0,0,.1)")};
`;
const DialogTitle = styled.div<{ $idle?: boolean }>`
  display: flex; align-items: center; justify-content: space-between; height: 36px; padding: 0 18px 0 6px;
  color: ${(p) => (p.$idle ? "#929292" : "#111")};
`;
const StructBody = styled.div`
  display: flex; gap: 18px; padding: 21px 21px 25px 18px;
`;
const StructList = styled.ul`
  flex: 1; height: 715px; padding: 1px 0 0 13px; border: 2px solid ${EDGE}; border-width: 2px 1px 1px 2px;
  border-right-color: #f3f3f3; border-bottom-color: #f3f3f3;
`;
const StructRow = styled.li`
  display: flex; align-items: center; gap: 7px; color: #111;
  &::before { content: ""; width: 16px; margin-right: -7px; border-top: 1px dotted #999; }
`;
const ButtonColumn = styled.div`
  display: flex; flex-direction: column; gap: 13px; width: 135px;
  & > :last-child { margin-top: auto; }
`;
const ClassicButton = styled.button<{ $default?: boolean; $w?: number }>`
  position: relative; width: ${(p) => (p.$w ? `${p.$w}px` : "100%")}; height: 34px; color: #111; background: #fdfdfd;
  border: solid; border-width: 1px 2px 3px 1px; border-color: #f6f6f6 #9a9a9a #9a9a9a #f6f6f6;
  &:disabled { color: #a8a8a8; }
  ${(p) => p.$default && css`border-width: 2px 4px 4px 2px; border-color: #8a8a8a #7d7d7d #7d7d7d #8a8a8a;`}
`;
const PromptForm = styled.form`
  padding: 12px 56px 19px 12px;
`;
const PromptLabel = styled.label`
  display: block; color: #222;
`;
const PromptField = styled.div`
  position: relative; margin: 22px 0 26px 51px;
`;
const PromptInput = styled.input`
  display: block; width: 100%; height: 28px; padding: 0 0 3px 5px; outline: 0; color: #111;
  border: solid ${EDGE}; border-width: 2px 0 0 2px;
`;
const Caret = styled.span`
  position: absolute; left: 43px; top: 4px; width: 1px; height: 20px; background: #111;
`;
const Pointer = styled.span`
  position: absolute; left: 83px; top: 3px;
`;
const PromptActions = styled.div`
  display: flex; justify-content: flex-end; gap: 12px;
`;

/* ---------- red call-outs ---------- */

const Frame = styled.span<{ $x: number; $y: number; $w: number; $h: number }>`
  position: absolute; z-index: 2; left: ${(p) => p.$x}px; top: ${(p) => p.$y}px; width: ${(p) => p.$w}px; height: ${(p) => p.$h}px;
  border: 8px solid ${RED}; pointer-events: none;
`;
const Remark = styled.span<{ $x: number; $y: number }>`
  position: absolute; z-index: 3; left: ${(p) => p.$x}px; top: ${(p) => p.$y}px; color: #de2027;
  font-size: 33px; line-height: 40px; white-space: nowrap; pointer-events: none;
`;

/* ---------- taskbar ---------- */

const TaskBar = styled.footer`
  display: flex; align-items: center; height: 70px; padding: 0 28px; color: #eee; border-top: 2px solid #333a44;
  background: linear-gradient(90deg, #0d1520 0%, #0b1320 20%, #03104a 31%, #020f5c 38%, #020f54 50%, #070c38 60%, #11101f 66%, #141414 70%, #081722 78%, #0a1624 88%, #10151f 100%);
`;
const SearchBox = styled.label`
  display: flex; align-items: center; width: 329px; height: 49px; margin: 0 4px 0 21px; padding: 0 4px 0 16px; gap: 17px;
  border: 1px solid #4b525c; border-radius: 25px; background: #333a46;
`;
const SearchInput = styled.input`
  flex: 1; width: 0; font-size: 21px; color: #eee;
  &::placeholder { color: #eee; opacity: 1; }
`;
const TaskButton = styled.button<{ $state?: "open" | "active" }>`
  position: relative; display: flex; align-items: center; justify-content: center; width: 58px; height: 60px; margin: 0 4px; border-radius: 6px;
  ${(p) => p.$state === "active" && css`background: #182360; border: 1px solid #2a3568;`}
  ${(p) => p.$state && css`
    &::after { content: ""; position: absolute; bottom: 1px; width: ${p.$state === "active" ? 24 : 8}px; height: 5px; border-radius: 3px;
      background: ${p.$state === "active" ? "#4fc0fb" : "#9aa3c4"}; }
  `}
`;
const Tray = styled.div`
  display: flex; align-items: center; margin-left: auto; gap: 22px;
`;
const InputMode = styled.span`
  margin: 0 5px;
`;
const TrayGroup = styled.div`
  display: flex; align-items: center; gap: 11px;
`;
const Clock = styled.div`
  text-align: right;
`;
const Watermark = styled.span`
  position: absolute; right: 15px; bottom: 8px; color: #d4d4d4; font-size: 18px;
`;

/* ---------- data ---------- */

const menus = ["工程[F]", "配置[S]", "查看[V]", "工具[T]", "帮助[H]"];
const toolGroups: [string, string][][] = [
  [["tools", "工程"]],
  [["zoomIn", "大图"], ["zoomOut", "小图"], ["detail", "详细"]],
  [["dev", "开发"], ["run", "运行"], ["bell", "报警"], ["history", "历史"], ["globe", "网络"], ["user", "用户"]],
  [["make", "MAKE"], ["view", "VIEW"]],
  [["about", "关于"]],
];
const sideTabs: [string, string][] = [
  ["gearSearch", "系统"], ["cube", "变量"], ["site", "站点"], ["pictures", "画面"], ["template", "模板"],
];
type Node = { icon: string; text: string; items?: Node[]; folded?: boolean; marked?: boolean };
const tree: Node[] = [
  { icon: "folder", text: "文件", items: [
    { icon: "pictures", text: "画面" }, { icon: "cmd", text: "命令语言", folded: true }, { icon: "recipe", text: "配方" },
    { icon: "batch", text: "批次" }, { icon: "chart", text: "非线性表" }] },
  { icon: "db", text: "数据库", items: [
    { icon: "struct", text: "结构变量", marked: true }, { icon: "books", text: "数据词典" }, { icon: "bellGroup", text: "报警组" }] },
  { icon: "monitor", text: "设备", items: [
    { icon: "plug", text: "COM1" }, { icon: "plug", text: "COM2" }, { icon: "dde", text: "DDE" }, { icon: "board", text: "板卡" },
    { icon: "opc", text: "OPC服务器" }, { icon: "netSite", text: "网络站点" }] },
  { icon: "sysGear", text: "系统配置", items: [
    { icon: "dev", text: "设置开发系统" }, { icon: "run", text: "设置运行系统" }, { icon: "bell", text: "报警配置" },
    { icon: "history", text: "历史数据记录" }, { icon: "globe", text: "网络配置" }, { icon: "user", text: "用户配置" },
    { icon: "printer", text: "打印配置" }, { icon: "sign", text: "电子签名配置" }, { icon: "note", text: "预定义注释" }] },
  { icon: "sql", text: "SQL访问管理器", items: [{ icon: "table", text: "表格模板" }, { icon: "pen", text: "记录体" }] },
];
const paneTools: [string, string][] = [
  ["instance", "实例"], ["docNew", "新建"], ["docEdit", "编辑"], ["docDelete", "删除"], ["docCopy", "复制"],
  ["paste", "粘贴"], ["exportDoc", "导出"], ["importDoc", "导入"], ["find", "查找"],
];
const taskApps: { icon: string; label: string; state?: "open" | "active" }[] = [
  { icon: "edge", label: "Edge" }, { icon: "settings", label: "设置" }, { icon: "calc", label: "计算器" },
  { icon: "wechat", label: "微信" }, { icon: "explorer", label: "文件资源管理器" },
  { icon: "docApp", label: "文档", state: "open" }, { icon: "logo", label: "工程浏览器", state: "active" },
];

const Tree = () => (
  <ul>
    {tree.map((group, g) => {
      const lastGroup = g === tree.length - 1;
      return (
        <li key={group.text}>
          <ul>
            <TreeRow>
              <Guide $from={g === 0 ? 8 : 0} $to={lastGroup ? 23 : 30} $stub>
                <Expander $open aria-label={`折叠${group.text}`} />
              </Guide>
              <Icon name={group.icon} />
              <TreeText>{group.text}</TreeText>
            </TreeRow>
            {group.items!.map((item, i) => (
              <TreeRow key={item.text}>
                <Guide $from={0} $to={lastGroup ? 0 : 30} />
                <Guide $from={0} $to={i === group.items!.length - 1 ? 16 : 30} $stub>
                  {item.folded && <Expander $open={false} aria-label={`展开${item.text}`} />}
                </Guide>
                <Icon name={item.icon} />
                <TreeText>{item.text}</TreeText>
                {item.marked && (
                  <>
                    <Frame $x={34} $y={-16} $w={154} $h={57} />
                    <Remark $x={216} $y={-8}>1</Remark>
                  </>
                )}
              </TreeRow>
            ))}
          </ul>
        </li>
      );
    })}
  </ul>
);

const StructDialog = () => (
  <Layer>
    <DialogFrame $w={708} role="dialog" aria-label="结构变量定义">
      <DialogTitle $idle>结构变量定义</DialogTitle>
      <StructBody>
        <StructList>
          <StructRow><Icon name="structDark" />结构变量</StructRow>
        </StructList>
        <ButtonColumn>
          <ClassicButton>
            新建结构
            <Frame $x={-29} $y={-17} $w={184} $h={62} />
            <Remark $x={193} $y={-18}>3</Remark>
          </ClassicButton>
          <ClassicButton disabled>增加成员</ClassicButton>
          <ClassicButton disabled>编辑</ClassicButton>
          <ClassicButton disabled>删除</ClassicButton>
          <ClassicButton>确定</ClassicButton>
        </ButtonColumn>
      </StructBody>
    </DialogFrame>
  </Layer>
);

const PromptDialog = () => (
  <Layer>
    <DialogFrame $w={430} $deep role="dialog" aria-label="输入框">
      <DialogTitle>
        输入框
        <IconButton aria-label="关闭"><Icon name="close" w={19} /></IconButton>
      </DialogTitle>
      <PromptForm onSubmit={(e) => e.preventDefault()}>
        <PromptLabel htmlFor="structName">请输入结构变量名称:</PromptLabel>
        <PromptField>
          <PromptInput id="structName" defaultValue="设备" />
          <Caret />
          <Pointer><Icon name="ibeam" w={22} h={27} /></Pointer>
          <Frame $x={-24} $y={-20} $w={92} $h={62} />
          <Remark $x={96} $y={-37}>4、键入结构体名称</Remark>
        </PromptField>
        <PromptActions>
          <ClassicButton $default $w={112} type="submit">
            确定
            <Frame $x={-17} $y={-12} $w={144} $h={60} />
            <Remark $x={16} $y={41}>5</Remark>
          </ClassicButton>
          <ClassicButton $w={112} type="button">取消</ClassicButton>
        </PromptActions>
      </PromptForm>
    </DialogFrame>
  </Layer>
);

export default function App() {
  return (
    <Screen>
      <Global />
      <TitleBar>
        <Icon name="logo" w={22} />
        <AppTitle>工程浏览器---变量测试Ⅱ</AppTitle>
        <ProgressPill />
        <WindowControls>
          <IconButton aria-label="最小化"><Icon name="minimise" w={18} /></IconButton>
          <IconButton aria-label="还原"><Icon name="restore" w={18} /></IconButton>
          <IconButton aria-label="关闭"><Icon name="close" w={18} /></IconButton>
        </WindowControls>
      </TitleBar>
      <MenuBar>{menus.map((m) => <button key={m}>{m}</button>)}</MenuBar>
      <ToolBar>
        <Grip />
        {toolGroups.map((group, g) => (
          <React.Fragment key={g}>
            {g > 0 && <ToolSeparator />}
            {group.map(([icon, text]) => (
              <ToolButton key={text} $on={icon === "zoomIn"}>
                <Icon name={icon} w={28} />
                {text}
              </ToolButton>
            ))}
          </React.Fragment>
        ))}
      </ToolBar>
      <Main>
        <TabStrip>
          {sideTabs.map(([icon, text]) => (
            <SideTab key={text}>
              <SideTabText>{text}</SideTabText>
              <Icon name={icon} />
            </SideTab>
          ))}
        </TabStrip>
        <TreePanel><Tree /></TreePanel>
        <Pane>
          <PaneBar>
            {paneTools.map(([icon, text]) => (
              <PaneButton key={text} $apart={icon === "find"}>
                <Icon name={icon} w={32} h={36} />
                {text}
              </PaneButton>
            ))}
          </PaneBar>
          <PaneBody>
            <BigItem>
              <Icon name="structBig" w={48} />
              <span>请双击这儿<br />进入 &lt;结构...</span>
              <Frame $x={-24} $y={-14} $w={162} $h={140} />
              <Remark $x={176} $y={12}>2</Remark>
            </BigItem>
          </PaneBody>
        </Pane>
      </Main>
      <StatusBar>
        <StatusText>就绪</StatusText>
        <StatusCell $w={648} $first />
        <StatusCell $w={42} />
        <StatusCell $w={54}>NUM</StatusCell>
        <StatusCell $w={49} />
      </StatusBar>
      <TaskBar>
        <IconButton aria-label="开始"><Icon name="windows" w={35} /></IconButton>
        <SearchBox>
          <Icon name="magnifier" w={22} />
          <SearchInput placeholder="搜索" aria-label="搜索" />
          <Icon name="football" w={72} h={37} vw={39} />
        </SearchBox>
        {taskApps.map((a) => (
          <TaskButton key={a.icon} $state={a.state} aria-label={a.label}><Icon name={a.icon} w={36} /></TaskButton>
        ))}
        <Tray>
          <Icon name="caretUp" w={20} />
          <InputMode>中</InputMode>
          <TrayGroup>
            <Icon name="wifi" w={24} />
            <Icon name="speaker" w={24} />
            <Icon name="battery" w={25} />
          </TrayGroup>
          <Clock>17:21<br />2023/8/20/星期日</Clock>
        </Tray>
      </TaskBar>
      <Watermark>CSDN @远晔航拍</Watermark>
      <StructDialog />
      <PromptDialog />
    </Screen>
  );
}
